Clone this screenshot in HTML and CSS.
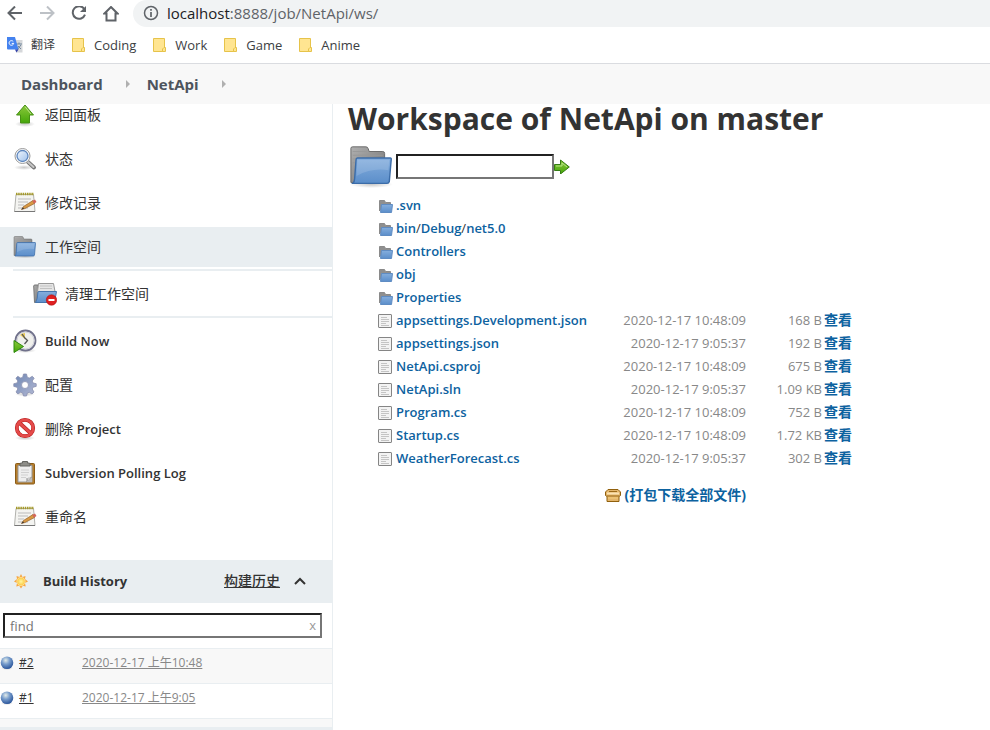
FILE: index.html
```html
<!DOCTYPE html>
<html lang="zh-CN">
<head>
<meta charset="utf-8">
<title>NetApi Workspace</title>
<link rel="stylesheet" href="styles.css">
</head>
<body>
<svg class="defs" aria-hidden="true">
  <defs>
    <linearGradient id="blue" x1="0" y1="0" x2="0" y2="1"><stop offset="0" stop-color="#85aedd"/><stop offset="1" stop-color="#5b8eca"/></linearGradient>
    <linearGradient id="gray" x1="0" y1="0" x2="1" y2="1"><stop offset="0" stop-color="#b0b0b0"/><stop offset="1" stop-color="#6f6f6f"/></linearGradient>
    <linearGradient id="green" x1="0" y1="0" x2="0" y2="1"><stop offset="0" stop-color="#8cc93c"/><stop offset="1" stop-color="#45a609"/></linearGradient>
    <linearGradient id="lens" x1="0" y1="0" x2="1" y2="1"><stop offset="0" stop-color="#f0f6fd"/><stop offset="1" stop-color="#a0c2ec"/></linearGradient>
    <linearGradient id="gear" x1="0" y1="0" x2="1" y2="1"><stop offset="0" stop-color="#6d86b3"/><stop offset="1" stop-color="#b4b9d4"/></linearGradient>
    <radialGradient id="ball" cx=".4" cy=".3" r=".7"><stop offset="0" stop-color="#e2ebe8"/><stop offset=".45" stop-color="#789dcc"/><stop offset="1" stop-color="#2a559b"/></radialGradient>
    <radialGradient id="sun"><stop offset="0" stop-color="#fff7a0"/><stop offset="1" stop-color="#fcc63c"/></radialGradient>
    <radialGradient id="shade"><stop offset="0" stop-color="#777" stop-opacity=".4"/><stop offset="1" stop-color="#777" stop-opacity="0"/></radialGradient>
  </defs>
  <symbol id="folder" viewBox="0 0 48 48">
    <ellipse cx="24" cy="43" rx="23" ry="4" fill="url(#shade)"/>
    <path d="M2 41V4.500Q2 3 4 3H18Q20 3 20.500 5L21.500 8H36Q38 8 38 10V20L10 41Z" fill="url(#gray)" stroke="#686868"/>
    <path d="M4 8H19M4 12H36M4 16H8M4 20H7" stroke="#999"/>
    <path d="M9 15H44Q45.500 15 45 17L43 40Q42.500 42 40.500 42H4Q6 40 6 37L7.500 17Q7.500 15 9 15Z" fill="url(#blue)" stroke="#3b6ca8" stroke-width="1.500"/>
    <path d="M9 17H43L42 28Q25 25 8 34Z" fill="#fff" opacity=".14"/>
  </symbol>
  <symbol id="folder-small" viewBox="0 0 16 16">
    <path d="M1.500 14V3.500H6.500L7.500 5.500H12.500V8" fill="#8f8f8f" stroke="#8a8a8a"/>
    <path d="M3.500 7.500H14.500L13.500 15.500H2.500Z" fill="url(#blue)" stroke="#5f8cc3"/>
  </symbol>
  <symbol id="up" viewBox="0 0 24 24">
    <ellipse cx="12" cy="21" rx="10" ry="3" fill="url(#shade)"/>
    <path d="M12 2 20.500 12H16.500V20H7.500V12H3.500Z" fill="url(#green)" stroke="#479016"/>
    <path d="M12 3.700 18 11" stroke="#bde38a"/>
  </symbol>
  <symbol id="search" viewBox="0 0 24 24">
    <ellipse cx="11" cy="20.500" rx="10" ry="2.500" fill="url(#shade)"/>
    <path d="M15 15 21 20.500" stroke="#777" stroke-width="4" stroke-linecap="round"/>
    <path d="M15 15 20.500 20" stroke="#c6c6c6" stroke-width="2" stroke-linecap="round"/>
    <circle cx="9.500" cy="9" r="7.500" fill="#fff" stroke="#999"/>
    <circle cx="9.500" cy="9" r="5.500" fill="url(#lens)" stroke="#5d86bd" stroke-width="1.300"/>
  </symbol>
  <symbol id="note" viewBox="0 0 24 24">
    <path d="M3 3.500H20.500L22 20.500H1.500Z" fill="#f4f4f1" stroke="#b1b1ad"/>
    <path d="M1.500 20.500H22" stroke="#777"/>
    <path d="M3 3H21" stroke="#a59a2a" stroke-width="2.500" stroke-dasharray="1.500 .7"/>
    <path d="M5 8H18M5 11H15M5 14H11M5 17H15" stroke="#bbb"/>
    <path d="M10.500 15.500 8.500 18.500 12 17.500 21.500 12.500 20 9.500Z" fill="#d89943" stroke="#93602a" stroke-width=".7"/>
    <path d="M19.500 9.700 22 8.500 23.500 11 21 12.800Z" fill="#d3655b"/>
    <path d="M8.500 18.500 10 16.200 11 17.800Z" fill="#333"/>
  </symbol>
  <symbol id="wipe" viewBox="0 0 24 24">
    <path d="M1.500 20.500 .700 4Q.700 3 2 3H5L7 20Z" fill="url(#gray)" stroke="#777"/>
    <path d="M5.500 1.500H20.500L22 9.500H4.500Z" fill="#e5e5e5" stroke="#999"/>
    <path d="M7 4H19M7 6.500H19" stroke="#c1c1c1"/>
    <path d="M5.500 9.500H23.500L21.500 20.500H2.500Q4.500 18 5 10Z" fill="url(#blue)" stroke="#4776ae"/>
    <circle cx="18.500" cy="18" r="5.200" fill="#df2021" stroke="#ae1111" stroke-width=".6"/>
    <path d="M15.500 18H21.500" stroke="#fff" stroke-width="2"/>
  </symbol>
  <symbol id="clock" viewBox="0 0 24 24">
    <ellipse cx="12" cy="21.500" rx="11" ry="2.500" fill="url(#shade)"/>
    <circle cx="12.500" cy="11.500" r="10" fill="#f0f0ec" stroke="#70718b" stroke-width="1.800"/>
    <circle cx="12.500" cy="11.500" r="8.500" fill="none" stroke="#cdced8"/>
    <path d="M12 10 7 6Q9 4 12 4Z" fill="#e7c95b"/>
    <path d="M9 5 12.500 10M12 9 14.500 11.500 11.500 15" fill="none" stroke="#555" stroke-width="1.300"/>
    <path d="M1 11.500 10.500 17.500 1 23.500Z" fill="url(#green)" stroke="#2d8a0c"/>
  </symbol>
  <symbol id="cog" viewBox="0 0 24 24">
    <ellipse cx="12" cy="21" rx="10" ry="2.500" fill="url(#shade)"/>
    <path fill-rule="evenodd" d="M10.500 1H13.500L14.300 4.300 16.300 5.100 19.300 3.300 21.200 5.200 19.200 8 20 10 23.200 10.700V13.400L20 14.200 19.200 16 21 19 19 21 16.200 19.200 14.300 20 13.500 23H10.500L9.700 20 7.700 19.200 4.900 21 3 19 4.800 16 4 14.200.800 13.400V10.700L4 10 4.800 8 2.900 5.200 4.800 3.300 7.700 5.100 9.700 4.300ZM12 8.500A3.500 3.500 0 1 0 12 15.500 3.500 3.500 0 1 0 12 8.500Z" fill="url(#gear)" stroke="#8a90b0" stroke-width=".8"/>
  </symbol>
  <symbol id="ban" viewBox="0 0 24 24">
    <ellipse cx="12" cy="21" rx="10" ry="2.500" fill="url(#shade)"/>
    <circle cx="12" cy="11" r="8.200" fill="#fff" stroke="#b51c1c" stroke-width="3.800"/>
    <path d="M6 5.500 18 16.500" stroke="#b51c1c" stroke-width="3.800"/>
    <circle cx="12" cy="11" r="8.200" fill="none" stroke="#e54b4a" stroke-width="2.700"/>
    <path d="M6 5.500 18 16.500" stroke="#e54b4a" stroke-width="2.700"/>
  </symbol>
  <symbol id="clip" viewBox="0 0 24 24">
    <rect x="2.500" y="2.500" width="19" height="20.500" rx="1" fill="#b67e2d" stroke="#8b5c18"/>
    <path d="M5 4.500H19V21H5Z" fill="#eee" stroke="#999"/>
    <path d="M8 9H16M8 11.500H16M8 14H15M8 16.500H13" stroke="#d0d0d0"/>
    <path d="M7 5V3Q7 2 8 2H9.500V.500H14.500V2H16Q17 2 17 3V5Z" fill="#8d8d88" stroke="#656561"/>
    <path d="M13 21V17Q16 18 19 15V21Z" fill="#bbb"/><path d="M13 21Q15.500 20 15 17Q17 18 19 16Z" fill="#fff" stroke="#999" stroke-width=".5"/>
  </symbol>
  <symbol id="file" viewBox="0 0 16 16">
    <rect x=".5" y="2.500" width="13" height="13" rx=".5" fill="#f3f3f3" stroke="#858585"/>
    <path d="M3 5.500H9M3 7.500H11M3 9.500H11M3 11.500H8M3 13.500H11" stroke="#c4c4c4"/>
  </symbol>
  <symbol id="box" viewBox="0 0 16 16">
    <path d="M3 2.500H13L15.500 5V8.500L14 9.500V14.500H2V9.500L.500 8.500V5Z" fill="#e3b56b" stroke="#91600d"/>
    <path d="M4 4.500H12M2 9H14" stroke="#9c6a18"/><path d="M2 6.500H14" stroke="#fbe3b4" stroke-width="2"/><path d="M3 11H13" stroke="#f5cd7d"/>
  </symbol>
  <symbol id="orb" viewBox="0 0 14 14"><ellipse cx="7" cy="12.500" rx="6" ry="1.500" fill="url(#shade)"/><circle cx="7" cy="6.800" r="6.300" fill="url(#ball)"/></symbol>
  <symbol id="mark" viewBox="0 0 14 16"><path d="M.500 1.500H11.500V14.500H.500Z" fill="#ffe591" stroke="#e6c34a"/><path d="M11 10.500H12.500V14.500H9.500V12Z" fill="#ffe591" stroke="#e6c34a"/></symbol>
  <symbol id="caret" viewBox="0 0 6 8"><path d="M1 0 5 4 1 8Z" fill="#b0b0b0"/></symbol>
</svg>

<header class="top">
  <div class="toolbar">
    <button class="tool" aria-label="Back"><svg viewBox="0 0 16 16"><path d="M15 7H2M8 .500 1.500 7 8 13.500" fill="none" stroke="#5f6368" stroke-width="2"/></svg></button>
    <button class="tool" aria-label="Forward"><svg viewBox="0 0 16 16"><path d="M1 7H14M8 .500 14.500 7 8 13.500" fill="none" stroke="#bdc1c6" stroke-width="2"/></svg></button>
    <button class="tool" aria-label="Reload"><svg viewBox="0 0 16 16"><path d="M13.300 3A6.300 6.300 0 1 0 14 8.700" fill="none" stroke="#5f6368" stroke-width="2"/><path d="M15 0V6H9Z" fill="#5f6368"/></svg></button>
    <button class="tool" aria-label="Home"><svg viewBox="0 0 16 16"><path d="M1.500 7.500H3.500V14.500H12.500V7.500H14.500L8 1Z" fill="none" stroke="#5f6368" stroke-width="2"/></svg></button>
    <div class="address"><svg viewBox="0 0 16 16"><circle cx="8" cy="8" r="6.500" fill="none" stroke="#5f6368" stroke-width="1.500"/><path d="M8 7V12M8 4V5.700" stroke="#5f6368" stroke-width="1.700"/></svg><span><b>localhost</b>:8888/job/NetApi/ws/</span></div>
  </div>
  <nav class="bookmarks" aria-label="Bookmarks">
    <a href="#"><svg class="translate" viewBox="0 0 16 16"><path d="M7 3H15.500V15.500H9Z" fill="#d5d7da"/><path d="M9 7H15M12 5.500V7M10 13 14 8M11 9 14 12" stroke="#71869b"/><path d="M0 0H8L11.500 12.500H1Q0 12.500 0 11.500Z" fill="#4482ef"/><path d="M8 12.500H11.500L9.500 15.500Z" fill="#3543ac"/><path d="M6.300 4.600A2.300 2.300 0 1 0 6.700 6.400H4.700" fill="none" stroke="#fff"/></svg><span class="small">翻译</span></a>
    <a href="#"><svg viewBox="0 0 14 16"><use href="#mark"/></svg><span>Coding</span></a>
    <a href="#"><svg viewBox="0 0 14 16"><use href="#mark"/></svg><span>Work</span></a>
    <a href="#"><svg viewBox="0 0 14 16"><use href="#mark"/></svg><span>Game</span></a>
    <a href="#"><svg viewBox="0 0 14 16"><use href="#mark"/></svg><span>Anime</span></a>
  </nav>
  <nav class="crumbs" aria-label="Breadcrumb">
    <a href="#">Dashboard</a><svg><use href="#caret"/></svg><a href="#">NetApi</a><svg><use href="#caret"/></svg>
  </nav>
</header>

<div class="page">
  <aside class="side">
    <ul class="tasks">
      <li><a href="#"><svg><use href="#up"/></svg>返回面板</a></li>
      <li><a href="#"><svg><use href="#search"/></svg>状态</a></li>
      <li><a href="#"><svg><use href="#note"/></svg>修改记录</a></li>
      <li><a class="current" href="#"><svg><use href="#folder"/></svg>工作空间</a>
        <div class="subtask"><a href="#"><svg><use href="#wipe"/></svg>清理工作空间</a></div></li>
      <li><a href="#"><svg><use href="#clock"/></svg><span class="latin">Build Now</span></a></li>
      <li><a href="#"><svg><use href="#cog"/></svg>配置</a></li>
      <li><a href="#"><svg><use href="#ban"/></svg><span>删除 <span class="latin">Project</span></span></a></li>
      <li><a href="#"><svg><use href="#clip"/></svg><span class="latin">Subversion Polling Log</span></a></li>
      <li><a href="#"><svg><use href="#note"/></svg>重命名</a></li>
    </ul>
    <section class="history">
      <div class="history-head">
        <svg class="sun" viewBox="0 0 16 16"><path d="M8 1 9.500 4 12.500 3 12 6 15 8.500 12 10 12.700 13.500 9.800 12.700 8 15.500 6.200 12.700 3.300 13.500 4 10 1 8.500 4 6 3.500 3 6.500 4Z" fill="#f6a640"/><circle cx="8" cy="8.500" r="4.200" fill="url(#sun)" stroke="#fff1c7" stroke-width=".6"/></svg>
        <h2>Build History</h2>
        <a href="#">构建历史</a>
        <button aria-label="Collapse"><svg viewBox="0 0 12 8"><path d="M1 7 6 2 11 7" fill="none" stroke="#333" stroke-width="2"/></svg></button>
      </div>
      <div class="find"><input type="text" placeholder="find" aria-label="Find build"><button aria-label="Clear">x</button></div>
      <ul class="builds">
        <li><svg><use href="#orb"/></svg><a class="num" href="#">#2</a><a class="when" href="#">2020-12-17 上午10:48</a></li>
        <li><svg><use href="#orb"/></svg><a class="num" href="#">#1</a><a class="when" href="#">2020-12-17 上午9:05</a></li>
      </ul>
      <div class="history-foot"></div>
    </section>
  </aside>

  <main>
    <h1>Workspace of NetApi on master</h1>
    <form class="path">
      <svg class="big"><use href="#folder"/></svg>
      <input type="text" aria-label="Path">
      <button type="button" aria-label="Go"><svg viewBox="0 0 16 16"><path d="M.500 6.500H6.500V2L15.300 9 6.500 16V12.500H.500Z" fill="url(#green)" stroke="#347d13"/><path d="M2 8H8V5L13 9" fill="none" stroke="#b6e486"/></svg></button>
    </form>
    <table class="files">
      <tbody>
        <tr><td class="icon"><svg><use href="#folder-small"/></svg></td><td><a href="#">.svn</a></td><td></td><td></td><td></td></tr>
        <tr><td class="icon"><svg><use href="#folder-small"/></svg></td><td><a href="#">bin</a>/<a href="#">Debug</a>/<a href="#">net5.0</a></td><td></td><td></td><td></td></tr>
        <tr><td class="icon"><svg><use href="#folder-small"/></svg></td><td><a href="#">Controllers</a></td><td></td><td></td><td></td></tr>
        <tr><td class="icon"><svg><use href="#folder-small"/></svg></td><td><a href="#">obj</a></td><td></td><td></td><td></td></tr>
        <tr><td class="icon"><svg><use href="#folder-small"/></svg></td><td><a href="#">Properties</a></td><td></td><td></td><td></td></tr>
        <tr><td class="icon"><svg><use href="#file"/></svg></td><td><a href="#">appsettings.Development.json</a></td><td class="date">2020-12-17 10:48:09</td><td class="size">168 B</td><td class="view"><a href="#">查看</a></td></tr>
        <tr><td class="icon"><svg><use href="#file"/></svg></td><td><a href="#">appsettings.json</a></td><td class="date">2020-12-17 9:05:37</td><td class="size">192 B</td><td class="view"><a href="#">查看</a></td></tr>
        <tr><td class="icon"><svg><use href="#file"/></svg></td><td><a href="#">NetApi.csproj</a></td><td class="date">2020-12-17 10:48:09</td><td class="size">675 B</td><td class="view"><a href="#">查看</a></td></tr>
        <tr><td class="icon"><svg><use href="#file"/></svg></td><td><a href="#">NetApi.sln</a></td><td class="date">2020-12-17 9:05:37</td><td class="size">1.09 KB</td><td class="view"><a href="#">查看</a></td></tr>
        <tr><td class="icon"><svg><use href="#file"/></svg></td><td><a href="#">Program.cs</a></td><td class="date">2020-12-17 10:48:09</td><td class="size">752 B</td><td class="view"><a href="#">查看</a></td></tr>
        <tr><td class="icon"><svg><use href="#file"/></svg></td><td><a href="#">Startup.cs</a></td><td class="date">2020-12-17 10:48:09</td><td class="size">1.72 KB</td><td class="view"><a href="#">查看</a></td></tr>
        <tr><td class="icon"><svg><use href="#file"/></svg></td><td><a href="#">WeatherForecast.cs</a></td><td class="date">2020-12-17 9:05:37</td><td class="size">302 B</td><td class="view"><a href="#">查看</a></td></tr>
      </tbody>
      <tfoot><tr><td colspan="3"><a class="zip" href="#"><svg><use href="#box"/></svg>(打包下载全部文件)</a></td><td colspan="2"></td></tr></tfoot>
    </table>
  </main>
</div>
</body>
</html>
```
FILE: styles.css
```css
* { box-sizing: border-box; }
body {
  margin: 0;
  background: #fff;
  color: #333;
  font: 13px/20px "Open Sans", "Noto Sans CJK SC", sans-serif;
}
a { color: inherit; text-decoration: none; }
ul { margin: 0; padding: 0; list-style: none; }
button { padding: 0; border: 0; background: none; font: inherit; }
svg { display: block; flex: none; }
.defs { position: absolute; width: 0; height: 0; }

.top { position: relative; z-index: 1; background: #fff; }
.toolbar { display: flex; align-items: center; height: 27px; padding-left: 7px; gap: 16px; }
.tool, .tool svg { width: 16px; height: 16px; }
.address {
  display: flex;
  flex: 1;
  align-items: center;
  gap: 8px;
  height: 27px;
  margin-left: -2px;
  padding: 0 0 2px 10px;
  border-radius: 14px 0 0 14px;
  background: #f1f3f4;
  color: #5f6368;
  font-size: 15px;
}
.address svg { width: 16px; height: 16px; }
.address b { color: #202124; font-weight: 400; }
.bookmarks {
  display: flex;
  align-items: center;
  gap: 17px;
  height: 37px;
  padding-left: 7px;
  border-bottom: 1px solid #dadce0;
  color: #3c4043;
}
.bookmarks a { display: flex; align-items: center; gap: 8px; }
.bookmarks svg { width: 14px; height: 16px; }
.bookmarks .translate { width: 16px; }
.bookmarks .small { font-size: 12px; }
.crumbs {
  display: flex;
  align-items: center;
  height: 40px;
  padding-left: 21px;
  gap: 22px;
  background: #f8f8f8;
  color: #4d545d;
  font-size: 15px;
  font-weight: 700;
}
.crumbs a + svg { margin-right: -6px; }
.crumbs svg { width: 6px; height: 8px; }

.page { display: grid; grid-template-columns: 333px 1fr; }
.side { border-right: 1px solid #e9eef1; }
.tasks { display: grid; gap: 4px; margin-top: -9px; font-size: 14px; }
.tasks a { display: flex; align-items: center; gap: 8px; height: 40px; padding-left: 13px; }
.tasks svg { width: 24px; height: 24px; }
.tasks .current { background: #e9eef1; }
.latin { font-size: 13px; font-weight: 600; }
.subtask {
  margin: 2px 0 -1px 13px;
  border: solid #e9eef1;
  border-width: 2px 0;
}
.subtask a { height: 45px; padding-left: 20px; }

.history { margin-top: 23px; }
.history-head {
  display: flex;
  align-items: center;
  height: 43px;
  padding: 0 26px 2px 13px;
  background: #e9eef1;
}
.history-head .sun { width: 16px; height: 16px; }
.history-head h2 { flex: 1; margin: 0 0 0 14px; font-size: 13px; }
.history-head a { font-size: 14px; font-weight: 500; text-decoration: underline; }
.history-head button { margin-left: 14px; }
.history-head button svg { width: 12px; height: 8px; }
.find { display: flex; position: relative; padding: 10px 10px 10px 3px; }
input {
  height: 25px;
  padding: 0 5px;
  border: 2px inset #767676;
  background: #fff;
  font: inherit;
}
.find input { flex: 1; min-width: 0; }
.find input::placeholder { color: #757575; }
.find button { position: absolute; top: 12px; right: 16px; color: #999; }
.builds li {
  display: grid;
  grid-template-columns: 19px 63px 1fr;
  align-items: center;
  height: 35px;
  padding-bottom: 6px;
  border-top: 1px solid #e9eef1;
  font-size: 12px;
}
.builds li:first-child { background: #f8f8f8; }
.builds svg { width: 14px; height: 14px; }
.builds a { text-decoration: underline; }
.builds .when { color: #888; }
.history-foot {
  height: 12px;
  border-top: 1px solid #e9eef1;
  border-bottom: 3px solid #e9eef1;
  background: #f8f8f8;
}

main { padding-left: 15px; }
h1 { margin: 0; font-size: 30px; line-height: 30px; }
.path { display: flex; align-items: center; height: 50px; margin-top: 7px; padding-left: 1px; }
.path .big { width: 45px; height: 45px; margin-right: 2px; }
.path input { width: 158px; }
.path svg { width: 16px; height: 16px; }
.files { width: 474px; margin: 2px 0 0 30px; border-collapse: collapse; }
.files td { height: 23px; padding: 0; white-space: nowrap; }
.files .icon { width: 18px; }
.files .icon svg { width: 16px; height: 16px; }
.files a { color: #0d629f; font-weight: 600; }
.files .date { width: 158px; color: #888; text-align: right; }
.files .size { width: 76px; color: #888; text-align: right; }
.files .view { width: 30px; padding-left: 2px; font-size: 14px; }
.files tfoot td { height: 52px; }
.files .zip { display: flex; align-items: center; justify-content: flex-end; gap: 4px; font-size: 14px; font-weight: 700; }
.files .view a { font-weight: 700; }
.zip svg { width: 16px; height: 16px; }
```
